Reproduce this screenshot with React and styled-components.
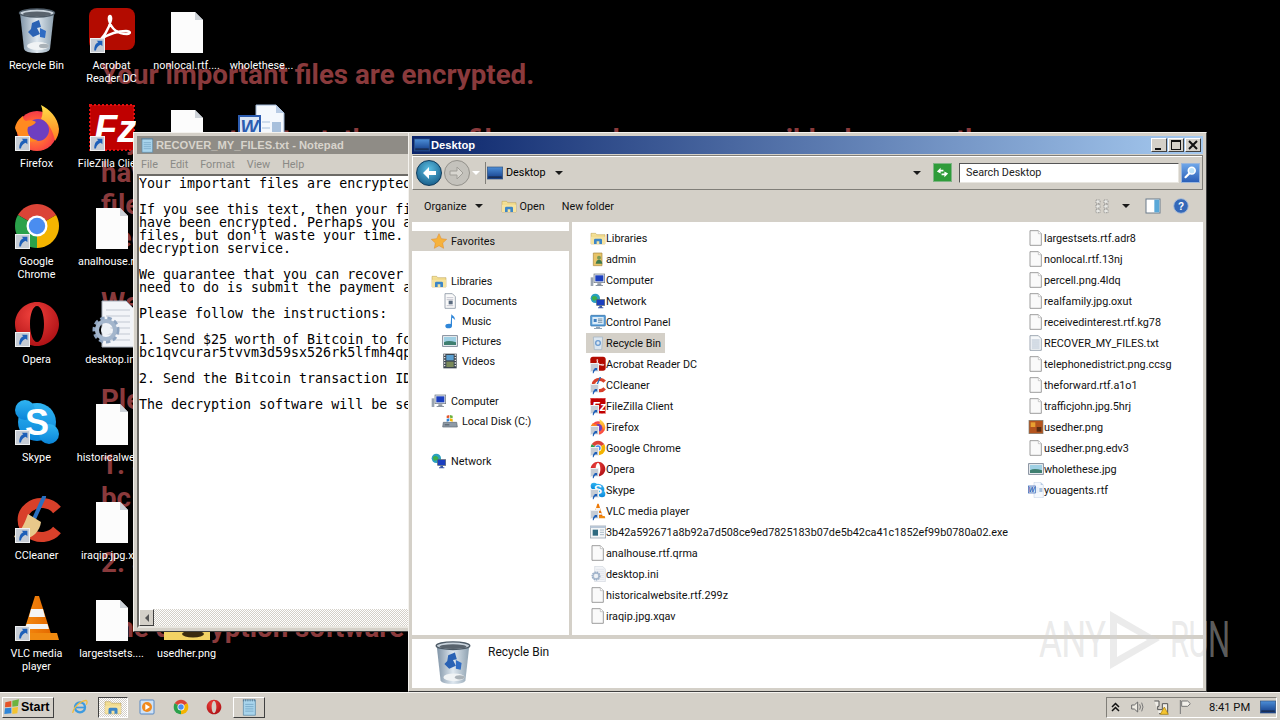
import styled, { createGlobalStyle } from 'styled-components';

const GlobalStyle = createGlobalStyle`
  html, body {
    margin: 0;
    padding: 0;
    background: #000;
    overflow: hidden;
  }
  body {
    font-family: Roboto, "Liberation Sans", Arial, sans-serif;
    font-size: 10.8px;
    color: #000;
  }
`;

/* ---------- icons ---------- */

const Defs = () => (
  <svg width="0" height="0" style={{ position: 'absolute' }}>
    <defs>
      <linearGradient id="binGlass" x1="0" y1="0" x2="1" y2="0">
        <stop offset="0" stopColor="#7f93a6" />
        <stop offset=".5" stopColor="#dfe8f0" />
        <stop offset="1" stopColor="#8ea1b0" />
      </linearGradient>
      <radialGradient id="foxBody" cx=".45" cy=".55" r=".6">
        <stop offset="0" stopColor="#ff9a2e" />
        <stop offset=".6" stopColor="#ff5a3a" />
        <stop offset="1" stopColor="#f0304f" />
      </radialGradient>
      <linearGradient id="foxFlame" x1="0" y1="0" x2="0" y2="1">
        <stop offset="0" stopColor="#ffe14a" />
        <stop offset="1" stopColor="#ff7b1e" />
      </linearGradient>
      <radialGradient id="operaRed" cx=".4" cy=".3" r=".8">
        <stop offset="0" stopColor="#f0413c" />
        <stop offset="1" stopColor="#a80d12" />
      </radialGradient>
      <linearGradient id="skypeBlue" x1="0" y1="0" x2="0" y2="1">
        <stop offset="0" stopColor="#30b5f2" />
        <stop offset="1" stopColor="#0a84d8" />
      </linearGradient>
      <linearGradient id="coneOrange" x1="0" y1="0" x2="1" y2="0">
        <stop offset="0" stopColor="#f58a10" />
        <stop offset="1" stopColor="#e56a00" />
      </linearGradient>
      <linearGradient id="folderFill" x1="0" y1="0" x2="0" y2="1">
        <stop offset="0" stopColor="#f6e6a0" />
        <stop offset="1" stopColor="#e2b84e" />
      </linearGradient>
      <linearGradient id="titleBlue" x1="0" y1="0" x2="0" y2="1">
        <stop offset="0" stopColor="#4d8fd8" />
        <stop offset="1" stopColor="#123a86" />
      </linearGradient>
    </defs>
  </svg>
);

const drawings = {
  bin: (
    <>
      <path d="M7 7h34l-4 36q-1 4-13 4t-13-4z" fill="url(#binGlass)" />
      <ellipse cx="24" cy="7" rx="17.5" ry="4" fill="#c9d3dc" stroke="#4d5a66" strokeWidth="1.5" />
      <ellipse cx="24" cy="8" rx="14" ry="2.4" fill="#59636d" />
      <path d="M19 17l7-3 2 7-4 1 3 6-7 3-5-5 3-3z" fill="#2a62b4" />
      <path d="M27 22l6 3-1 7-5-1z" fill="#2f6cc4" />
      <ellipse cx="25" cy="40" rx="11" ry="4" fill="#f0f3f5" />
      <ellipse cx="31" cy="40" rx="5" ry="2.2" fill="#aab2b8" />
    </>
  ),
  acrobat: (
    <>
      <rect x="1" y="2" width="46" height="42" rx="8" fill="#b30b00" />
      <path d="M9 36c6-3 12-13 14-22 1-5-3-6-2 0 2 9 9 14 18 14 4 0 4-3-1-3-9 0-17 3-25 8-3 2-5 4-4 3z" fill="none" stroke="#fff" strokeWidth="2.4" />
    </>
  ),
  page: (
    <>
      <path d="M8 6h24l8 8v33H8z" fill="#fcfcfc" />
      <path d="M32 6v8h8z" fill="#cdd2d8" />
    </>
  ),
  firefox: (
    <>
      <circle cx="24" cy="27" r="20" fill="url(#foxBody)" />
      <path d="M28 1c8 4 17 12 18 24 0 5-2 9-4 12-2-10-6-18-14-22 2-4 2-9 0-14z" fill="url(#foxFlame)" />
      <circle cx="25" cy="26" r="11" fill="#6e3fc0" />
      <path d="M2 24c1-6 5-10 8-12 0 3 1 4 3 5 3-1 7-1 10 1-2 3-5 4-8 5-2 6 2 13 10 13-8 4-19 1-23-12z" fill="#ff8a1f" />
    </>
  ),
  filezilla: (
    <>
      <rect x="2" y="1" width="44" height="45" fill="#bf0000" stroke="#e01010" strokeWidth="2" strokeDasharray="2 2" />
      <text x="6" y="38" fontFamily="Liberation Sans" fontWeight="700" fontStyle="italic" fontSize="38" fill="#fff">Fz</text>
    </>
  ),
  chrome: (
    <>
      <path d="M24 24L4.95 13A22 22 0 0 1 43.05 13z" fill="#db4437" />
      <path d="M24 24L43.05 13A22 22 0 0 1 24 46z" fill="#f4b400" />
      <path d="M24 24L24 46A22 22 0 0 1 4.95 13z" fill="#2ba14b" />
      <circle cx="24" cy="24" r="10.5" fill="#fff" />
      <circle cx="24" cy="24" r="8.2" fill="#4a8df0" />
    </>
  ),
  opera: (
    <path
      d="M24 2C12 2 2 12 2 24s10 22 22 22 22-10 22-22S36 2 24 2zm0 4c4 0 7 8 7 18s-3 18-7 18-7-8-7-18 3-18 7-18z"
      fill="url(#operaRed)"
      fillRule="evenodd"
    />
  ),
  skype: (
    <>
      <circle cx="24" cy="24" r="19" fill="url(#skypeBlue)" />
      <circle cx="12" cy="12" r="10" fill="url(#skypeBlue)" />
      <circle cx="36" cy="36" r="10" fill="url(#skypeBlue)" />
      <text x="24" y="37" textAnchor="middle" fontFamily="Liberation Sans" fontWeight="700" fontSize="36" fill="#fff">S</text>
    </>
  ),
  ccleaner: (
    <>
      <path d="M44 14A19 17 0 1 0 44 34" fill="none" stroke="#d8402a" strokeWidth="10" />
      <path d="M31 1L21 23" stroke="#2a6fc0" strokeWidth="4" strokeLinecap="round" />
      <path d="M15 18l13 8c-1 9-8 16-18 18-4 0-8-1-9-4 6-3 10-11 14-22z" fill="#e8c88a" />
    </>
  ),
  vlc: (
    <>
      <path d="M22 2h4l12 38H10z" fill="url(#coneOrange)" />
      <path d="M18 15h12l2 8H16zM13.5 30h21l1.4 5H12z" fill="#f4f4f4" />
      <path d="M4 39h40l2 7H2z" fill="#f08a10" />
    </>
  ),
  word: (
    <>
      <path d="M18 1h20l8 8v38H18z" fill="#f4f8fd" stroke="#9db4d4" />
      <path d="M38 1v8h8z" fill="#b8cbe4" />
      <path d="M24 18h8M24 24h8M24 30h8" stroke="#a8c0dc" />
      <rect x="34" y="18" width="9" height="12" fill="#a8c0dc" />
      <rect x="1" y="12" width="21" height="21" fill="#dbe6f5" stroke="#2c5cb0" strokeWidth="2" />
      <text x="11.5" y="29" textAnchor="middle" fontFamily="Liberation Sans" fontWeight="700" fontStyle="italic" fontSize="19" fill="#2c5cb0">W</text>
    </>
  ),
  gearDoc: (
    <>
      <path d="M14 1h24l8 8v38H14z" fill="#f2f4f8" stroke="#a8b0bc" />
      <path d="M18 10h24M18 16h24M18 22h24M18 28h24M18 34h24M18 40h24" stroke="#c2c8d2" />
      <circle cx="18" cy="30" r="11" fill="none" stroke="#8ea4c0" strokeWidth="5" strokeDasharray="4 2.6" />
      <circle cx="18" cy="30" r="9" fill="none" stroke="#a4b6cc" strokeWidth="4" />
      <circle cx="18" cy="30" r="5" fill="#eef2f6" />
    </>
  ),
  photo: (
    <>
      <rect x="1" y="6" width="46" height="40" fill="#f6edd0" />
      <rect x="1" y="38" width="46" height="8" fill="#f3d264" />
      <ellipse cx="30" cy="40" rx="11" ry="3.5" fill="#3a2a10" />
    </>
  ),
  pngThumb: (
    <>
      <rect x="3" y="4" width="42" height="40" fill="#b4541e" stroke="#7a7a70" strokeWidth="2" />
      <rect x="8" y="10" width="14" height="14" fill="#e8a030" />
      <rect x="26" y="24" width="14" height="14" fill="#5a2c10" />
    </>
  ),
  library: (
    <>
      <path d="M3 10h14l3 4h25v28H3z" fill="url(#folderFill)" stroke="#b89a48" strokeWidth="1.5" />
      <path d="M3 20h42v22H3z" fill="#f5e3a0" />
      <path d="M12 42V30q0-4 4-4h16q4 0 4 4v12h-8v-8h-8v8z" fill="#3c86c8" />
    </>
  ),
  admin: (
    <>
      <path d="M10 6h26v38H10z" fill="#e8c468" stroke="#a88a3c" strokeWidth="2" />
      <circle cx="27" cy="20" r="6" fill="#7a9a58" />
      <path d="M17 38q2-12 10-12t10 12z" fill="#3f7a4c" />
    </>
  ),
  computer: (
    <>
      <rect x="2" y="16" width="8" height="26" fill="#9aa4b0" />
      <rect x="12" y="6" width="32" height="26" fill="#dfe4ec" stroke="#66707c" strokeWidth="2" />
      <rect x="16" y="10" width="24" height="18" fill="#1b3fc0" />
      <path d="M22 34h12v5h5v3H17v-3h5z" fill="#8a94a0" />
    </>
  ),
  network: (
    <>
      <circle cx="16" cy="16" r="14" fill="#2aa0c0" />
      <path d="M6 12q8-6 14 0t-4 10-10-10z" fill="#3fae4a" />
      <rect x="20" y="20" width="24" height="17" fill="#1b3fc0" stroke="#55606c" strokeWidth="2" />
      <path d="M28 38h8v5h4v3H24v-3h4z" fill="#3b5aa8" />
    </>
  ),
  panel: (
    <>
      <rect x="2" y="4" width="44" height="32" rx="2" fill="#5a9fd8" stroke="#2c6aa4" strokeWidth="2" />
      <rect x="7" y="9" width="34" height="22" fill="#dcecf8" />
      <rect x="11" y="15" width="9" height="9" fill="#3f7fc0" />
      <path d="M24 15h13M24 20h13M24 25h13" stroke="#4a6a88" strokeWidth="2" />
      <path d="M18 38h12v4h6v3H12v-3h6z" fill="#90a4b6" />
    </>
  ),
  miniBin: (
    <>
      <path d="M10 6h28l-3 38H13z" fill="#dbe6f0" stroke="#9fb0c0" strokeWidth="2" />
      <circle cx="24" cy="24" r="7" fill="none" stroke="#6a9ad0" strokeWidth="4" />
    </>
  ),
  exe: (
    <>
      <rect x="1" y="6" width="46" height="36" fill="#f4f6f8" stroke="#8a96a4" strokeWidth="2" />
      <rect x="1" y="6" width="46" height="6" fill="#b8c6d6" />
      <rect x="8" y="17" width="16" height="18" fill="#2f6a80" />
      <path d="M30 18h12M30 25h12M30 32h12" stroke="#8aa0b4" strokeWidth="2" />
    </>
  ),
  doc: (
    <>
      <path d="M6 2h25l9 9v35H6z" fill="#fafafa" stroke="#8c8c8c" strokeWidth="2.5" />
      <path d="M31 2v9h9" fill="#fff" stroke="#b0b0b0" strokeWidth="2" />
    </>
  ),
  textDoc: (
    <>
      <path d="M6 2h25l9 9v35H6z" fill="#f6f8fa" stroke="#8c96a4" strokeWidth="2.5" />
      <path d="M11 15h24M11 21h24M11 27h24M11 33h24M11 39h24" stroke="#8ea4bc" strokeWidth="2" />
    </>
  ),
  docBlue: (
    <>
      <path d="M9 2h22l9 9v35H9z" fill="#fafafa" stroke="#8c96a4" strokeWidth="2.5" />
      <path d="M14 14h20M14 20h20M14 38h20" stroke="#aab" strokeWidth="2" />
      <rect x="20" y="23" width="12" height="11" fill="#5c6c80" />
    </>
  ),
  music: (
    <path d="M28 4q10 6 12 18-4-6-10-8v24q0 8-11 8-9 0-9-7t11-7q3 0 5 1z" fill="#2f86d8" />
  ),
  pictures: (
    <>
      <rect x="2" y="8" width="44" height="32" fill="#eef2f6" stroke="#6c7888" strokeWidth="2.5" />
      <rect x="6" y="12" width="36" height="24" fill="#9fd0e4" />
      <path d="M6 36V28q12-8 36 0v8z" fill="#3f7f70" />
    </>
  ),
  videos: (
    <>
      <rect x="4" y="2" width="40" height="44" fill="#3c4650" />
      <rect x="13" y="6" width="22" height="16" fill="#5a9fd0" />
      <rect x="13" y="26" width="22" height="16" fill="#7a8a5a" />
      <path d="M6 6h4M6 14h4M6 22h4M6 30h4M6 38h4M38 6h4M38 14h4M38 22h4M38 30h4M38 38h4" stroke="#e6e6e6" strokeWidth="4" />
    </>
  ),
  disk: (
    <>
      <path d="M4 28h40l2 14H2z" fill="#8e9aa6" stroke="#5c6874" strokeWidth="2" />
      <rect x="8" y="34" width="14" height="3" fill="#4e5862" />
      <path d="M14 8l8-2v8l-8 2z" fill="#e4552a" />
      <path d="M24 6l8 2v8l-8-2z" fill="#6db33f" />
      <path d="M14 18l8-2v8l-8 2z" fill="#2f86d8" />
      <path d="M24 16l8 2v8l-8-2z" fill="#f4b400" />
    </>
  ),
  star: (
    <path d="M24 2l7 15 16 2-12 11 3 16-14-8-14 8 3-16L1 19l16-2z" fill="#f6b23c" stroke="#e08a2a" strokeWidth="1.5" />
  ),
  desktop: (
    <>
      <rect x="1" y="6" width="46" height="36" fill="url(#titleBlue)" stroke="#30527f" strokeWidth="2" />
      <rect x="4" y="34" width="40" height="5" fill="#1a2f55" />
    </>
  ),
  notepad: (
    <>
      <path d="M9 5h32v41H9z" fill="#a8d4ec" stroke="#5c8aa8" strokeWidth="2" />
      <path d="M9 3v6M15 3v6M21 3v6M27 3v6M33 3v6M39 3v6" stroke="#4e6f88" strokeWidth="2" />
      <path d="M14 17h22M14 23h22M14 29h22M14 35h22" stroke="#6fa0c0" strokeWidth="2" />
    </>
  ),
  ie: (
    <>
      <circle cx="24" cy="25" r="15" fill="none" stroke="#3d9be0" strokeWidth="7" />
      <rect x="12" y="23" width="26" height="5" fill="#3d9be0" />
      <path d="M2 42C4 26 24 6 42 4c4 2 4 7 1 13" fill="none" stroke="#f2bc3c" strokeWidth="3.5" />
    </>
  ),
  media: (
    <>
      <rect x="3" y="3" width="42" height="42" rx="3" fill="#cfe2f6" stroke="#5688c4" strokeWidth="3" />
      <circle cx="24" cy="24" r="15" fill="#f08a1e" />
      <path d="M19 15l14 9-14 9z" fill="#fff" />
    </>
  ),
  flag: (
    <path d="M10 3v42M14 6h18l8 8-8 8H14z" fill="#f2f0ea" stroke="#777" strokeWidth="3" />
  ),
  speaker: (
    <>
      <path d="M8 18h8l10-9v30l-10-9H8z" fill="#efece4" stroke="#6a6a6a" strokeWidth="3" />
      <path d="M32 16q5 8 0 16M38 11q8 13 0 26" fill="none" stroke="#777" strokeWidth="3" />
    </>
  ),
  netTray: (
    <>
      <path d="M4 6h14v16h-4v10h14V14h16v30H18" fill="#f0eee8" stroke="#555" strokeWidth="3" />
      <path d="M34 24l12 22H22z" fill="#f4c430" stroke="#a67c00" strokeWidth="2" />
    </>
  ),
  start: (
    <>
      <path d="M4 10l18-4v17L3 25z" fill="#e4552a" />
      <path d="M25 5l20-4-3 20-17 2z" fill="#6db33f" />
      <path d="M3 28l19-2v17L1 45z" fill="#2f86d8" />
      <path d="M25 26l17-2-2 19-15 2z" fill="#f4c430" />
    </>
  ),
  search: (
    <>
      <circle cx="28" cy="18" r="11" fill="#bfe3f8" stroke="#fff" strokeWidth="5" />
      <path d="M20 27L8 39" stroke="#fff" strokeWidth="7" strokeLinecap="round" />
    </>
  ),
  help: (
    <>
      <circle cx="24" cy="24" r="22" fill="#3468b8" stroke="#a8bcd8" strokeWidth="3" />
      <text x="24" y="35" textAnchor="middle" fontFamily="Liberation Sans" fontWeight="700" fontSize="30" fill="#fff">?</text>
    </>
  ),
  views: (
    <path d="M6 6h12v10H6zM30 6h12v10H30zM6 20h12v10H6zM30 20h12v10H30zM6 34h12v10H6zM30 34h12v10H30z" fill="#e8e8e4" stroke="#777" strokeWidth="2" strokeDasharray="3 2" />
  ),
  pane: (
    <>
      <rect x="3" y="3" width="42" height="42" fill="#fff" stroke="#6a7a8a" strokeWidth="3" />
      <rect x="28" y="5" width="15" height="38" fill="#5aa8d8" />
    </>
  ),
};

const Svg = styled.svg`
  display: block;
  flex: none;
`;

const Icon = ({ name, size = 16 }) => (
  <Svg width={size} height={size} viewBox="0 0 48 48">
    {drawings[name]}
  </Svg>
);

const ShortcutBox = styled.span`
  position: absolute;
  left: ${({ $small }) => ($small ? '0' : '2px')};
  bottom: ${({ $small }) => ($small ? '0' : '1px')};
  width: ${({ $small }) => ($small ? '9px' : '15px')};
  height: ${({ $small }) => ($small ? '9px' : '15px')};
  background: #c6ccd4;
  border: 1px solid #eef0f2;
  box-sizing: border-box;
`;

const Shortcut = ({ small }) => (
  <ShortcutBox $small={small}>
    <svg width="100%" height="100%" viewBox="0 0 16 16">
      <path d="M4 14C4 8 6 5 9 4L7 2h7v7l-2-2c-3 1-5 3-6 7z" fill="#1d5fb8" />
    </svg>
  </ShortcutBox>
);

/* ---------- wallpaper ---------- */

const Wallpaper = styled.div`
  position: absolute;
  left: 101px;
  top: 59px;
  white-space: nowrap;
  font-family: Roboto, "Liberation Sans", sans-serif;
  font-weight: 700;
  font-size: 27.7px;
  line-height: 32.5px;
  color: #8a3a3c;
`;

const WallLine = styled.div`
  height: 32.5px;
`;

const wallpaperLines = [
  'Your important files are encrypted.',
  '',
  'If you see this text, then your files are no longer accessible, because they',
  'have been encrypted. Perhaps you are busy looking for a way to recover your',
  'files, but don\'t waste your time.',
  'decryption service.',
  '',
  'We guarantee that you can recover all your files',
  'need to do is submit the payment',
  '',
  'Please follow the instructions:',
  '',
  '1. Send $25 worth of Bitcoin to following address:',
  'bc1qvcurar5tvvm3d59sx526rk5lfmh4qp',
  '',
  '2. Send the Bitcoin transaction ID',
  '',
  'The decryption software will be sent',
];

/* ---------- desktop icons ---------- */

const IconGrid = styled.div`
  position: absolute;
  left: -1px;
  top: 0;
  display: grid;
  grid-template-columns: repeat(4, 75px);
  grid-template-rows: repeat(7, 98px);
`;

const DesktopItem = styled.div`
  grid-column: ${({ $col }) => $col};
  grid-row: ${({ $row }) => $row};
  display: flex;
  flex-direction: column;
  align-items: center;
  padding-top: 6px;
  color: #fff;
`;

const DesktopIconBox = styled.div`
  position: relative;
  width: 48px;
  height: 48px;
`;

const DesktopLabel = styled.div`
  margin-top: 5px;
  line-height: 13px;
  text-align: center;
  white-space: pre;
`;

const desktopItems = [
  { col: 1, row: 1, icon: 'bin', label: 'Recycle Bin' },
  { col: 1, row: 2, icon: 'firefox', label: 'Firefox', link: true },
  { col: 1, row: 3, icon: 'chrome', label: 'Google\nChrome', link: true },
  { col: 1, row: 4, icon: 'opera', label: 'Opera', link: true },
  { col: 1, row: 5, icon: 'skype', label: 'Skype', link: true },
  { col: 1, row: 6, icon: 'ccleaner', label: 'CCleaner', link: true },
  { col: 1, row: 7, icon: 'vlc', label: 'VLC media\nplayer', link: true },
  { col: 2, row: 1, icon: 'acrobat', label: 'Acrobat\nReader DC', link: true },
  { col: 2, row: 2, icon: 'filezilla', label: 'FileZilla Client', link: true },
  { col: 2, row: 3, icon: 'page', label: 'analhouse.r....' },
  { col: 2, row: 4, icon: 'gearDoc', label: 'desktop.ini' },
  { col: 2, row: 5, icon: 'page', label: 'historicalwe....' },
  { col: 2, row: 6, icon: 'page', label: 'iraqip.jpg.x...' },
  { col: 2, row: 7, icon: 'page', label: 'largestsets....' },
  { col: 3, row: 1, icon: 'page', label: 'nonlocal.rtf....' },
  { col: 3, row: 2, icon: 'page', label: 'percell.png' },
  { col: 3, row: 7, icon: 'photo', label: 'usedher.png' },
  { col: 4, row: 1, label: 'wholethese...' },
  { col: 4, row: 2, icon: 'word', label: 'youagents.rtf' },
];

/* ---------- window chrome ---------- */

const Frame = styled.div`
  position: absolute;
  box-sizing: border-box;
  display: flex;
  flex-direction: column;
  padding: 4px;
  background: #d4d0c8;
  border-top: 1px solid #f4f2ee;
  border-left: 1px solid #f4f2ee;
  border-bottom: 1px solid #404040;
  border-right: 1px solid #404040;
`;

const NotepadFrame = styled(Frame)`
  left: 133px;
  top: 132px;
  width: 300px;
  height: 500px;
  padding: 3px 3px 3px 3px;
  z-index: 2;
`;

const ExplorerFrame = styled(Frame)`
  left: 408px;
  top: 132px;
  width: 799px;
  height: 560px;
  padding: 3px 3px 2px;
  z-index: 3;
`;

const TitleBar = styled.div`
  flex: none;
  height: 18px;
  display: flex;
  align-items: center;
  gap: 1px;
  padding-left: 2px;
  font-family: "Liberation Sans", sans-serif;
  font-weight: 700;
  font-size: 11.2px;
  background: ${({ $active }) => ($active ? 'linear-gradient(90deg, #0a246a, #a6caf0)' : '#8f8c86')};
  color: ${({ $active }) => ($active ? '#fff' : '#d8d4cc')};
`;

const WinButtons = styled.div`
  margin-left: auto;
  margin-right: 2px;
  display: flex;
  gap: 1px;
`;

const WinButton = styled.div`
  width: 16px;
  height: 14px;
  box-sizing: border-box;
  display: flex;
  align-items: center;
  justify-content: center;
  background: #d4d0c8;
  border: 1px solid;
  border-color: #fff #404040 #404040 #fff;
`;

const MenuBar = styled.div`
  flex: none;
  height: 20px;
  display: flex;
  align-items: center;
  gap: 12px;
  padding-left: 4px;
  color: #8a8a86;
`;

const NotepadPane = styled.div`
  flex: 1;
  min-height: 0;
  display: flex;
  flex-direction: column;
  background: #fff;
  border: 2px solid;
  border-color: #6c6a66 #e8e6e0 #e8e6e0 #6c6a66;
`;

const NotepadText = styled.pre`
  flex: 1;
  margin: 0;
  padding-top: 1px;
  overflow: hidden;
  font-family: "DejaVu Sans Mono", "Liberation Mono", monospace;
  font-size: 13.3px;
  line-height: 13px;
  color: #000;
`;

const HScroll = styled.div`
  flex: none;
  height: 17px;
  display: flex;
  background: repeating-conic-gradient(#d4d0c8 0 25%, #fff 0 50%) 0 0 / 2px 2px;
`;

const ScrollButton = styled.div`
  width: 15px;
  box-sizing: border-box;
  display: flex;
  align-items: center;
  justify-content: center;
  background: #d4d0c8;
  border: 1px solid;
  border-color: #fff #404040 #404040 #fff;
`;

const ArrowLeft = styled.span`
  border: 4px solid transparent;
  border-right-color: #555;
  border-left-width: 0;
`;

const Caret = styled.span`
  flex: none;
  width: 0;
  height: 0;
  border: 4px solid transparent;
  border-top-color: ${({ $light }) => ($light ? '#fff' : '#1a1a1a')};
  border-bottom-width: 0;
`;

/* ---------- explorer ---------- */

const AddressBar = styled.div`
  flex: none;
  height: 35px;
  margin-top: 1px;
  box-sizing: border-box;
  display: flex;
  align-items: center;
  padding: 0 2px 0 3px;
  border: 1px solid;
  border-color: #807e78 #807e78 #807e78 #fff;
  box-shadow: inset 0 1px 0 #fff;
`;

const RoundButton = styled.div`
  width: 26px;
  height: 26px;
  border-radius: 50%;
  margin-right: 2px;
  box-sizing: border-box;
  display: flex;
  align-items: center;
  justify-content: center;
  background: ${({ $on }) => ($on ? 'radial-gradient(circle at 50% 35%, #5cc0e4, #0b4a78)' : '#c4c2bc')};
  border: 1px solid ${({ $on }) => ($on ? '#0c3a5c' : '#93918b')};
`;

const Crumb = styled.div`
  flex: 1;
  height: 22px;
  display: flex;
  align-items: center;
  gap: 3px;
  margin-left: 5px;
  padding-left: 1px;
  border-left: 1px solid #807e78;
`;

const CrumbCaret = styled(Caret)`
  margin-left: 6px;
`;

const GoCaret = styled(Caret)`
  margin-right: 12px;
`;

const Refresh = styled.div`
  width: 19px;
  height: 19px;
  box-sizing: border-box;
  display: flex;
  align-items: center;
  justify-content: center;
  background: #2f9c3a;
  border: 1px solid #7fb584;
`;

const SearchBox = styled.div`
  width: 220px;
  height: 20px;
  margin-left: 7px;
  box-sizing: border-box;
  display: flex;
  align-items: center;
  padding-left: 6px;
  background: #fff;
  border: 1px solid;
  border-color: #555 #e8e6e0 #e8e6e0 #555;
  color: #222;
`;

const SearchButton = styled.div`
  width: 19px;
  height: 20px;
  margin-left: 2px;
  box-sizing: border-box;
  display: flex;
  align-items: center;
  justify-content: center;
  background: linear-gradient(#6ea6e8, #2a5fb8);
  border: 1px solid #9ab6dc;
`;

const ToolBar = styled.div`
  flex: none;
  height: 32px;
  display: flex;
  align-items: center;
  padding: 0 14px 0 12px;
  color: #111;
`;

const ToolItem = styled.div`
  display: flex;
  align-items: center;
  gap: ${({ $gap }) => $gap || 3}px;
  margin-right: ${({ $after }) => $after || 0}px;
`;

const ToolRight = styled.div`
  margin-left: auto;
  display: flex;
  align-items: center;
  gap: 12px;
`;

const ViewsCaret = styled(Caret)`
  margin-right: 3px;
`;

const ExplorerBody = styled.div`
  flex: none;
  height: 413px;
  display: flex;
  background: #d4d0c8;
`;

const NavPane = styled.div`
  flex: none;
  width: 157px;
  margin-right: 3px;
  padding-top: 9px;
  box-sizing: border-box;
  background: #fff;
`;

const NavGroup = styled.div`
  margin-bottom: 20px;
`;

const NavRow = styled.div`
  height: 20px;
  display: flex;
  align-items: center;
  gap: 4px;
  padding-left: ${({ $child }) => ($child ? '30px' : '19px')};
  background: ${({ $head }) => ($head ? '#d4d0c8' : 'transparent')};
  color: #111;
`;

const FileList = styled.div`
  flex: 1;
  display: grid;
  grid-auto-flow: column;
  grid-template-columns: 438px 1fr;
  grid-template-rows: repeat(19, 21px);
  padding: 6px 0 0 14px;
  background: #fff;
`;

const FileRow = styled.div`
  justify-self: start;
  height: 20px;
  display: flex;
  align-items: center;
  padding: 0 4px;
  white-space: nowrap;
  color: #111;
  background: ${({ $selected }) => ($selected ? '#d4d0c8' : 'transparent')};
`;

const FileIconBox = styled.span`
  position: relative;
  flex: none;
  width: 16px;
  height: 16px;
`;

const Separator = styled.div`
  flex: none;
  height: 4px;
`;

const DetailsPane = styled.div`
  flex: none;
  height: 49px;
  display: flex;
  align-items: flex-start;
  padding-left: 18px;
  background: #fff;
`;

const DetailsName = styled.div`
  margin: 6px 0 0 12px;
  font-size: 12px;
  color: #111;
`;

const navGroups = [
  [{ icon: 'star', label: 'Favorites', head: true }],
  [
    { icon: 'library', label: 'Libraries' },
    { icon: 'docBlue', label: 'Documents', child: true },
    { icon: 'music', label: 'Music', child: true },
    { icon: 'pictures', label: 'Pictures', child: true },
    { icon: 'videos', label: 'Videos', child: true },
  ],
  [
    { icon: 'computer', label: 'Computer' },
    { icon: 'disk', label: 'Local Disk (C:)', child: true },
  ],
  [{ icon: 'network', label: 'Network' }],
];

const files = [
  { icon: 'library', name: 'Libraries' },
  { icon: 'admin', name: 'admin' },
  { icon: 'computer', name: 'Computer' },
  { icon: 'network', name: 'Network' },
  { icon: 'panel', name: 'Control Panel' },
  { icon: 'miniBin', name: 'Recycle Bin', selected: true },
  { icon: 'acrobat', name: 'Acrobat Reader DC', link: true },
  { icon: 'ccleaner', name: 'CCleaner', link: true },
  { icon: 'filezilla', name: 'FileZilla Client', link: true },
  { icon: 'firefox', name: 'Firefox', link: true },
  { icon: 'chrome', name: 'Google Chrome', link: true },
  { icon: 'opera', name: 'Opera', link: true },
  { icon: 'skype', name: 'Skype', link: true },
  { icon: 'vlc', name: 'VLC media player', link: true },
  { icon: 'exe', name: '3b42a592671a8b92a7d508ce9ed7825183b07de5b42ca41c1852ef99b0780a02.exe' },
  { icon: 'doc', name: 'analhouse.rtf.qrma' },
  { icon: 'gearDoc', name: 'desktop.ini' },
  { icon: 'doc', name: 'historicalwebsite.rtf.299z' },
  { icon: 'doc', name: 'iraqip.jpg.xqav' },
  { icon: 'doc', name: 'largestsets.rtf.adr8' },
  { icon: 'doc', name: 'nonlocal.rtf.13nj' },
  { icon: 'doc', name: 'percell.png.4ldq' },
  { icon: 'doc', name: 'realfamily.jpg.oxut' },
  { icon: 'doc', name: 'receivedinterest.rtf.kg78' },
  { icon: 'textDoc', name: 'RECOVER_MY_FILES.txt' },
  { icon: 'doc', name: 'telephonedistrict.png.ccsg' },
  { icon: 'doc', name: 'theforward.rtf.a1o1' },
  { icon: 'doc', name: 'trafficjohn.jpg.5hrj' },
  { icon: 'pngThumb', name: 'usedher.png' },
  { icon: 'doc', name: 'usedher.png.edv3' },
  { icon: 'pictures', name: 'wholethese.jpg' },
  { icon: 'word', name: 'youagents.rtf' },
];

const noteText = `Your important files are encrypted.

If you see this text, then your files
have been encrypted. Perhaps you are
files, but don't waste your time. Nobody
decryption service.

We guarantee that you can recover all
need to do is submit the payment and

Please follow the instructions:

1. Send $25 worth of Bitcoin to following
bc1qvcurar5tvvm3d59sx526rk5lfmh4qp

2. Send the Bitcoin transaction ID

The decryption software will be sent`;

/* ---------- taskbar ---------- */

const Screen = styled.div`
  position: relative;
  width: 1280px;
  height: 720px;
  display: flex;
  flex-direction: column;
  overflow: hidden;
  background: #000;
`;

const Workspace = styled.div`
  position: relative;
  flex: none;
  height: 692px;
`;

const Taskbar = styled.div`
  flex: none;
  height: 28px;
  box-sizing: border-box;
  display: flex;
  align-items: center;
  padding: 1px 3px 0 2px;
  background: #d4d0c8;
  border-top: 1px solid #f6f4f0;
`;

const StartButton = styled.div`
  width: 52px;
  height: 21px;
  box-sizing: border-box;
  display: flex;
  align-items: center;
  gap: 1px;
  padding-left: 1px;
  font-family: "Liberation Sans", sans-serif;
  font-weight: 700;
  font-size: 12.5px;
  background: #d4d0c8;
  border: 1px solid;
  border-color: #fff #404040 #404040 #fff;
`;

const TaskSlot = styled.div`
  width: ${({ $w }) => $w}px;
  height: 21px;
  margin-left: ${({ $left }) => $left}px;
  box-sizing: border-box;
  display: flex;
  align-items: center;
  justify-content: center;
  ${({ $state }) =>
    $state === 'active'
      ? `border: 1px solid; border-color: #404040 #fff #fff #404040;
         background: repeating-conic-gradient(#d4d0c8 0 25%, #fff 0 50%) 0 0 / 2px 2px;`
      : ''}
  ${({ $state }) =>
    $state === 'raised' ? 'border: 1px solid; border-color: #fff #404040 #404040 #fff;' : ''}
`;

const Tray = styled.div`
  margin-left: auto;
  width: 171px;
  height: 21px;
  box-sizing: border-box;
  display: flex;
  align-items: center;
  padding-left: 4px;
  border: 1px solid;
  border-color: #807e78 #fff #fff #807e78;
`;

const TrayChevron = styled.svg`
  flex: none;
  margin-right: 9px;
`;

const TrayIcon = styled.span`
  width: 16px;
  margin-right: 8px;
`;

const Clock = styled.span`
  margin-left: 8px;
  width: 51px;
  font-size: 11.2px;
  color: #111;
`;

/* ---------- watermark ---------- */

const Watermark = styled.div`
  position: absolute;
  left: 1039px;
  top: 608px;
  z-index: 4;
  display: flex;
  align-items: center;
  height: 64px;
  font-family: Roboto, sans-serif;
  font-weight: 400;
  font-size: 50px;
  color: rgba(210, 210, 210, 0.45);
  pointer-events: none;
`;

const WatermarkWord = styled.span`
  display: inline-block;
  transform: scaleX(${({ $scale }) => $scale});
  transform-origin: left;
  width: ${({ $w }) => $w}px;
  margin-left: ${({ $left }) => $left || 0}px;
  letter-spacing: -1px;
`;

export default function App() {
  return (
    <>
      <GlobalStyle />
      <Defs />
      <Screen>
        <Workspace>
          <Wallpaper>
            {wallpaperLines.map((line, i) => (
              <WallLine key={i}>{line}</WallLine>
            ))}
          </Wallpaper>

          <IconGrid>
            {desktopItems.map((item) => (
              <DesktopItem key={item.label} $col={item.col} $row={item.row}>
                <DesktopIconBox>
                  {item.icon && <Icon name={item.icon} size={48} />}
                  {item.link && <Shortcut />}
                </DesktopIconBox>
                <DesktopLabel>{item.label}</DesktopLabel>
              </DesktopItem>
            ))}
          </IconGrid>

          <NotepadFrame>
            <TitleBar>
              <Icon name="notepad" size={16} />
              RECOVER_MY_FILES.txt - Notepad
            </TitleBar>
            <MenuBar>
              <span>File</span>
              <span>Edit</span>
              <span>Format</span>
              <span>View</span>
              <span>Help</span>
            </MenuBar>
            <NotepadPane>
              <NotepadText>{noteText}</NotepadText>
              <HScroll>
                <ScrollButton>
                  <ArrowLeft />
                </ScrollButton>
              </HScroll>
            </NotepadPane>
          </NotepadFrame>

          <ExplorerFrame>
            <TitleBar $active>
              <Icon name="desktop" size={16} />
              Desktop
              <WinButtons>
                <WinButton>
                  <svg width="10" height="10" viewBox="0 0 10 10"><path d="M1 8h6v2H1z" fill="#111" /></svg>
                </WinButton>
                <WinButton>
                  <svg width="10" height="10" viewBox="0 0 10 10"><path d="M0 0h10v10H0zM1 2v7h8V2z" fill="#111" fillRule="evenodd" /></svg>
                </WinButton>
                <WinButton>
                  <svg width="10" height="10" viewBox="0 0 10 10"><path d="M1 1l8 8M9 1L1 9" stroke="#111" strokeWidth="2" /></svg>
                </WinButton>
              </WinButtons>
            </TitleBar>

            <AddressBar>
              <RoundButton $on>
                <svg width="18" height="18" viewBox="0 0 18 18"><path d="M9 3L3 9l6 6v-4h7V7H9z" fill="#fff" /></svg>
              </RoundButton>
              <RoundButton>
                <svg width="18" height="18" viewBox="0 0 18 18"><path d="M9 3l6 6-6 6v-4H2V7h7z" fill="#d8d6d0" stroke="#a09e98" /></svg>
              </RoundButton>
              <Caret $light />
              <Crumb>
                <Icon name="desktop" size={16} />
                Desktop
                <CrumbCaret />
              </Crumb>
              <GoCaret />
              <Refresh>
                <svg width="15" height="15" viewBox="0 0 16 16"><path d="M2 7l4-4v2h3v2H6v2zM14 9l-4 4v-2H7V9h3V7z" fill="#fff" /></svg>
              </Refresh>
              <SearchBox>Search Desktop</SearchBox>
              <SearchButton>
                <Icon name="search" size={15} />
              </SearchButton>
            </AddressBar>

            <ToolBar>
              <ToolItem $gap={8} $after={18}>
                Organize
                <Caret />
              </ToolItem>
              <ToolItem $after={17}>
                <Icon name="library" size={16} />
                Open
              </ToolItem>
              <ToolItem>New folder</ToolItem>
              <ToolRight>
                <Icon name="views" size={16} />
                <ViewsCaret />
                <Icon name="pane" size={16} />
                <Icon name="help" size={16} />
              </ToolRight>
            </ToolBar>

            <ExplorerBody>
              <NavPane>
                {navGroups.map((group) => (
                  <NavGroup key={group[0].label}>
                    {group.map((row) => (
                      <NavRow key={row.label} $child={row.child} $head={row.head}>
                        <Icon name={row.icon} size={16} />
                        {row.label}
                      </NavRow>
                    ))}
                  </NavGroup>
                ))}
              </NavPane>
              <FileList>
                {files.map((file) => (
                  <FileRow key={file.name} $selected={file.selected}>
                    <FileIconBox>
                      <Icon name={file.icon} size={16} />
                      {file.link && <Shortcut small />}
                    </FileIconBox>
                    {file.name}
                  </FileRow>
                ))}
              </FileList>
            </ExplorerBody>
            <Separator />
            <DetailsPane>
              <Icon name="bin" size={46} />
              <DetailsName>Recycle Bin</DetailsName>
            </DetailsPane>
          </ExplorerFrame>

          <Watermark>
            <WatermarkWord $w={67} $scale={0.7}>ANY</WatermarkWord>
            <svg width="56" height="64" viewBox="0 0 56 64">
              <path d="M4 3l50 29L4 61zM11 15v34l30-17z" fill="currentColor" fillRule="evenodd" />
            </svg>
            <WatermarkWord $w={60} $left={8} $scale={0.62}>RUN</WatermarkWord>
          </Watermark>
        </Workspace>

        <Taskbar>
          <StartButton>
            <Icon name="start" size={16} />
            Start
          </StartButton>
          <TaskSlot $w={16} $left={18}><Icon name="ie" size={16} /></TaskSlot>
          <TaskSlot $w={30} $left={10} $state="active"><Icon name="library" size={18} /></TaskSlot>
          <TaskSlot $w={16} $left={11}><Icon name="media" size={16} /></TaskSlot>
          <TaskSlot $w={16} $left={18}><Icon name="chrome" size={16} /></TaskSlot>
          <TaskSlot $w={16} $left={17}><Icon name="opera" size={16} /></TaskSlot>
          <TaskSlot $w={32} $left={11} $state="raised"><Icon name="notepad" size={18} /></TaskSlot>
          <Tray>
            <TrayChevron width="9" height="10" viewBox="0 0 9 10">
              <path d="M1 5l3.5-3.5L8 5M1 9l3.5-3.5L8 9" fill="none" stroke="#111" strokeWidth="1.5" />
            </TrayChevron>
            <TrayIcon><Icon name="speaker" size={16} /></TrayIcon>
            <TrayIcon><Icon name="netTray" size={16} /></TrayIcon>
            <TrayIcon><Icon name="flag" size={16} /></TrayIcon>
            <Clock>8:41 PM</Clock>
            <Icon name="desktop" size={16} />
          </Tray>
        </Taskbar>
      </Screen>
    </>
  );
}
